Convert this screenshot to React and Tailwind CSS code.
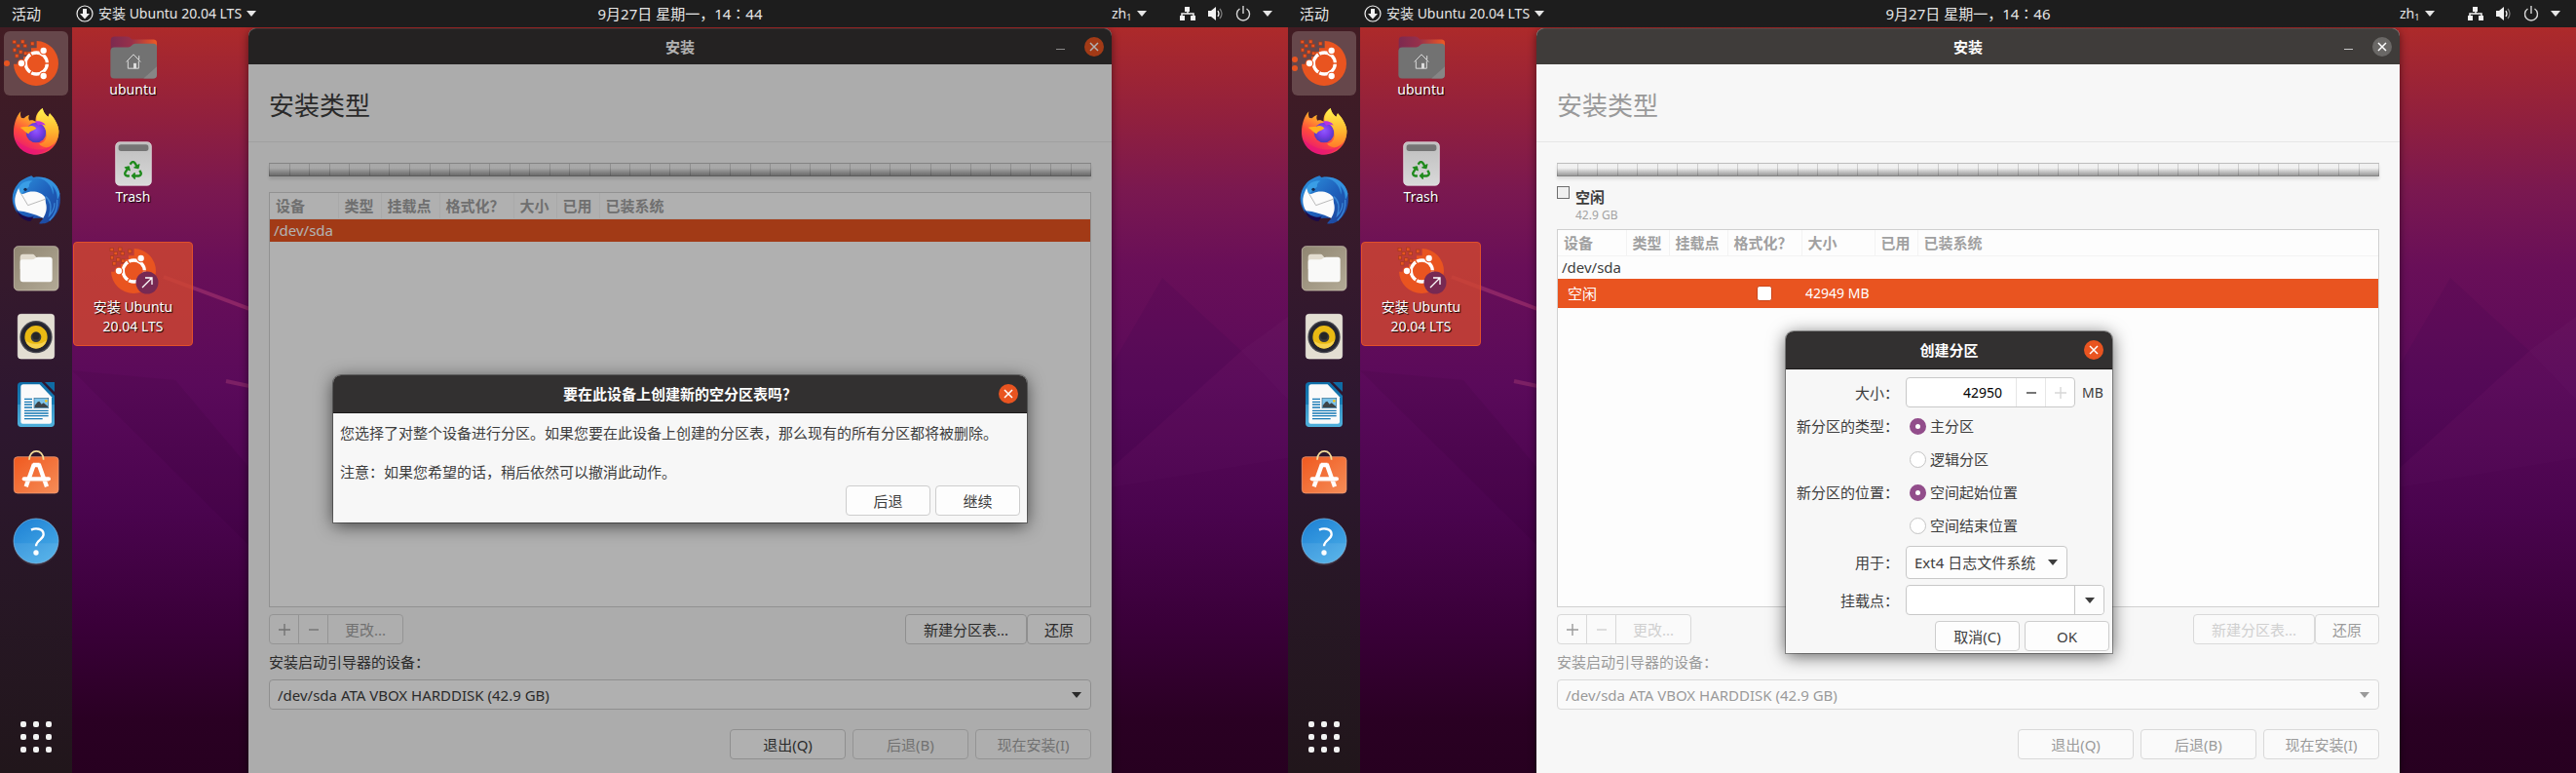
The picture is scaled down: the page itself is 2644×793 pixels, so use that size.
import React, { useId } from "react";
import { FaRecycle } from "react-icons/fa";

const FONT = "font-['Noto_Sans','Noto_Sans_CJK_SC',sans-serif]";

/* Shared gradients used by the dock and desktop icons */
function IconDefs() {
  return (
    <svg className="absolute h-0 w-0" aria-hidden="true">
      <defs>
        <linearGradient id="fox-body" x1="0.8" y1="0" x2="0.3" y2="1">
          <stop offset="0" stopColor="#fff44f" />
          <stop offset="0.35" stopColor="#ffa82a" />
          <stop offset="0.65" stopColor="#ff4a3d" />
          <stop offset="1" stopColor="#e6127a" />
        </linearGradient>
        <radialGradient id="fox-globe" cx="0.5" cy="0.4" r="0.6">
          <stop offset="0" stopColor="#9059ff" />
          <stop offset="0.5" stopColor="#7a3ce8" />
          <stop offset="1" stopColor="#4a3ab8" />
        </radialGradient>
        <linearGradient id="fox-tail" x1="0" y1="0" x2="0" y2="1">
          <stop offset="0" stopColor="#fff44f" />
          <stop offset="0.6" stopColor="#ffb42e" />
          <stop offset="1" stopColor="#ff7a2a" />
        </linearGradient>
        <linearGradient id="bird-body" x1="0" y1="0" x2="1" y2="1">
          <stop offset="0" stopColor="#2f97e0" />
          <stop offset="0.5" stopColor="#1f62bd" />
          <stop offset="1" stopColor="#1c3f96" />
        </linearGradient>
        <linearGradient id="files-bg" x1="0" y1="0" x2="1" y2="1">
          <stop offset="0" stopColor="#8f8571" />
          <stop offset="1" stopColor="#b3aa96" />
        </linearGradient>
        <linearGradient id="writer-bg" x1="0" y1="0" x2="0" y2="1">
          <stop offset="0" stopColor="#0e6ea8" />
          <stop offset="0.5" stopColor="#1b7db5" />
          <stop offset="0.51" stopColor="#3794c6" />
          <stop offset="1" stopColor="#4fb0dc" />
        </linearGradient>
        <linearGradient id="store-bg" x1="0" y1="0" x2="1" y2="1">
          <stop offset="0" stopColor="#f0591f" />
          <stop offset="1" stopColor="#f58d58" />
        </linearGradient>
        <linearGradient id="help-bg" x1="0" y1="0" x2="0.6" y2="1">
          <stop offset="0" stopColor="#1c7fd4" />
          <stop offset="1" stopColor="#47aae6" />
        </linearGradient>
        <linearGradient id="folder-tab" x1="0" y1="0" x2="1" y2="0">
          <stop offset="0" stopColor="#7c2a50" />
          <stop offset="0.45" stopColor="#97304a" />
          <stop offset="1" stopColor="#ef5a24" />
        </linearGradient>
        <linearGradient id="bin-body" x1="0" y1="0" x2="0" y2="1">
          <stop offset="0" stopColor="#bdbdbd" />
          <stop offset="1" stopColor="#d9d9d9" />
        </linearGradient>
      </defs>
    </svg>
  );
}

const PIXELS = [
  [38, 123], [64, 122], [50, 135], [71, 135], [94, 128], [39, 148],
  [58, 154], [73, 158], [46, 166],
];

function UbuntuIcon() {
  return (
    <svg viewBox="36 120 150 150" className="h-[50px] w-[50px]" aria-hidden="true">
      <path
        d="M113 126A69 69 0 1 1 42 197L60 197L60 184L72 184L72 174L84 174L84 160L96 160L96 148L113 148Z"
        fill="#e95420"
      />
      {PIXELS.map(([x, y]) => (
        <rect key={x + "-" + y} x={x + 1} y={y + 1} width="10" height="10" fill="#e95420" stroke="#a3391c" strokeWidth="2" />
      ))}
      <circle cx="112" cy="195" r="33" fill="none" stroke="#fff" strokeWidth="10" />
      <path d="M112 195L152 195M112 195L91 160M112 195L91 230" stroke="#e95420" strokeWidth="4" />
      <circle cx="112" cy="195" r="27" fill="#e95420" />
      {[[66, 195], [134, 156], [134, 234]].map(([x, y]) => (
        <g key={y}>
          <circle cx={x} cy={y} r="13" fill="#e95420" />
          <circle cx={x} cy={y} r="9.5" fill="#fff" />
        </g>
      ))}
    </svg>
  );
}

function FirefoxIcon() {
  return (
    <svg viewBox="36 328 150 150" className="h-[50px] w-[50px]" aria-hidden="true">
      <path
        d="M64 341C62 350 63 355 66 361L74 362C78 357 84 353 90 352C87 358 87 364 91 369C97 366 104 368 110 372C108 356 116 340 131 331C133 342 139 351 148 358L153 347C168 362 180 383 181 401C182 444 150 474 111 474C72 474 42 444 42 405C42 381 50 356 64 341Z"
        fill="url(#fox-body)"
      />
      <circle cx="111" cy="406" r="31" fill="url(#fox-globe)" />
      <path
        d="M131 331C133 342 139 351 148 358L153 347C168 362 180 383 181 401C181 420 174 436 160 446C144 456 128 452 120 440C136 438 144 426 143 411C142 395 136 384 126 379L118 378C108 366 116 342 131 331Z"
        fill="url(#fox-tail)"
      />
      <path d="M62 390C72 387 84 390 92 386C98 382 108 388 112 392C108 400 92 400 88 410C82 408 76 400 62 390Z" fill="#ffb01f" />
      <path d="M108 372C120 368 136 374 140 384C132 380 124 381 118 384Z" fill="#b833e1" />
      <path d="M46 425C54 456 84 472 112 470C140 469 164 452 174 428C160 464 92 474 46 425Z" fill="#e3127c" opacity="0.5" />
    </svg>
  );
}

function ThunderbirdIcon() {
  return (
    <svg viewBox="36 541 150 150" className="h-[50px] w-[50px]" aria-hidden="true">
      <path
        d="M56 566C64 556 80 547 97 542L103 547C142 540 176 560 184 596C190 632 178 668 146 686C138 690 128 690 120 689L134 672L110 672C84 676 60 668 48 648C32 620 36 588 56 566Z"
        fill="url(#bird-body)"
      />
      <path d="M50 645C62 664 84 672 104 668L94 682C72 680 56 666 50 645Z" fill="#1b0a4a" />
      <path d="M58 578C52 590 48 600 46 612C45 630 50 642 56 650C78 652 106 660 133 672C142 658 146 642 141 626L139 608C128 594 108 588 88 592C76 594 68 604 62 592Z" fill="#fbfbfb" />
      <path d="M62 592L86 633L139 614" fill="none" stroke="#b9b9b9" strokeWidth="3" />
      <path d="M58 580C64 562 84 556 100 558C92 562 88 568 90 575C84 582 72 590 66 598C62 592 58 586 58 580Z" fill="#3a9ee6" />
      <path d="M104 548C138 548 160 570 163 600C166 590 164 580 160 572C172 584 178 600 176 616C182 608 184 600 184 596C176 560 142 541 104 548Z" fill="#3491dd" />
      <path d="M140 606C154 616 160 636 152 664C162 654 168 640 168 626M176 616C178 640 168 664 152 680" fill="none" stroke="#3a86d6" strokeWidth="4" />
      <circle cx="78" cy="584" r="5" fill="#152a52" />
    </svg>
  );
}

function FilesIcon() {
  return (
    <svg viewBox="36 752 150 150" className="h-[50px] w-[50px]" aria-hidden="true">
      <rect x="43" y="760" width="137" height="136" rx="13" fill="url(#files-bg)" stroke="#d8d0bd" strokeWidth="2" />
      <path d="M62 794Q62 784 71 784H100Q104 784 107 788L112 794H152V830H62Z" fill="#e2dccf" />
      <path d="M62 808Q62 801 70 801H98Q104 801 108 797Q112 793 118 793H153Q161 793 161 801V861Q161 870 153 870H70Q62 870 62 861Z" fill="#f9f9f8" />
    </svg>
  );
}

function RhythmboxIcon() {
  return (
    <svg viewBox="36 962 150 150" className="h-[50px] w-[50px]" aria-hidden="true">
      <rect x="55" y="969" width="112" height="137" rx="10" fill="#e3ded2" stroke="#f4f1ea" strokeWidth="2" />
      <circle cx="111" cy="1039" r="50" fill="#4a4a52" />
      <circle cx="111" cy="1039" r="46" fill="#25252f" />
      <circle cx="111" cy="1039" r="35" fill="#e9b913" />
      <path d="M79 1050A33 33 0 0 0 143 1050Q128 1062 111 1060Q92 1062 79 1050Z" fill="#f6d24f" />
      <circle cx="111" cy="1039" r="16" fill="#3a3a3a" />
      <circle cx="111" cy="1036" r="11" fill="#262626" />
    </svg>
  );
}

function WriterIcon() {
  return (
    <svg viewBox="36 4 150 150" className="h-[50px] w-[50px]" aria-hidden="true">
      <path d="M66 10H128L168 52V137Q168 148 157 148H65Q54 148 54 137V21Q54 10 66 10Z" fill="url(#writer-bg)" />
      <path d="M138 10H168V40Z" fill="#0f6ba4" />
      <path d="M72 17H122L159 56V132Q159 138 153 138H70Q64 138 64 132V25Q64 17 72 17Z" fill="#fafafa" />
      <path d="M75 62H99M75 71H99M75 79H99M75 88H99M75 98H149M75 106H149M75 114H149M75 123H131" stroke="#1478b4" strokeWidth="4" />
      <rect x="105" y="59" width="44" height="31" fill="#7cc3ea" stroke="#3b6f8f" strokeWidth="2" />
      <path d="M107 88V82L116 71L121 69L128 78L134 74L147 84V88Z" fill="#3d4448" />
      <circle cx="142" cy="68" r="4" fill="#f3c21c" />
    </svg>
  );
}

function SoftwareIcon() {
  return (
    <svg viewBox="36 208 150 150" className="h-[50px] w-[50px]" aria-hidden="true">
      <rect x="43" y="234" width="137" height="112" rx="11" fill="url(#store-bg)" stroke="#f7a37c" strokeWidth="2" />
      <path d="M90 243C90 208 134 208 134 243" fill="none" stroke="#f4dd9a" strokeWidth="5" />
      <path d="M105 256L80 326M119 256L144 326M102 259H122" stroke="#fff" strokeWidth="13" />
      <path d="M74 302H150" stroke="#fff" strokeWidth="12" strokeLinecap="round" />
      <path d="M74 309H150" stroke="#f9cdb9" strokeWidth="2" />
    </svg>
  );
}

function HelpIcon() {
  return (
    <svg viewBox="36 425 150 150" className="h-[50px] w-[50px]" aria-hidden="true">
      <circle cx="111" cy="500" r="69" fill="url(#help-bg)" stroke="#7fc0ec" strokeWidth="2" />
      <path d="M42 507A69 69 0 0 0 180 507Z" fill="#fff" opacity="0.08" />
      <path d="M96 466C108 460 134 460 134 480C134 496 111 498 111 516" fill="none" stroke="#fff" strokeWidth="7" />
      <circle cx="111" cy="536" r="8" fill="#fff" />
    </svg>
  );
}

function HomeFolderIcon() {
  return (
    <svg viewBox="334 105 150 140" className="h-[47px] w-[50px]" aria-hidden="true">
      <path d="M339 160V124Q339 112 351 112H388Q395 112 399 116L404 121H470Q481 121 481 132V160Z" fill="url(#folder-tab)" />
      <path d="M338 158Q338 145 350 145H392Q399 145 404 139Q408 134 415 134H470Q481 134 481 145V230Q481 241 470 241H349Q338 241 338 230Z" fill="#727272" />
      <path d="M481 204V230Q481 241 470 241H440Z" fill="#868686" />
      <path d="M387 190L409 167L431 190M392 187V210H425V187M426 183V171" fill="none" stroke="#dcdcdc" strokeWidth="3" />
      <rect x="409" y="194" width="9" height="16" fill="#dcdcdc" />
    </svg>
  );
}

function TrashIcon() {
  return (
    <span className="relative flex h-[46px] w-[38px] justify-center">
      <svg viewBox="351 435 116 140" className="h-[46px] w-[38px]" aria-hidden="true">
        <rect x="353" y="437" width="112" height="136" rx="13" fill="url(#bin-body)" stroke="#ececec" strokeWidth="2" />
        <rect x="362" y="445" width="94" height="20" rx="8" fill="#757575" />
      </svg>
      <FaRecycle className="absolute top-[20px] h-[19px] w-[19px] text-[#1f8a1c]" />
    </span>
  );
}

function InstallShortcutIcon() {
  return (
    <span className="relative">
      <UbuntuIcon />
      <svg viewBox="0 0 24 24" className="absolute -right-px bottom-px h-6 w-6" aria-hidden="true">
        <circle cx="12" cy="12" r="11.500" fill="#772953" />
        <path d="M7 17L16.500 7.500M10 7H17V14" fill="none" stroke="#fff" strokeWidth="1.300" />
      </svg>
    </span>
  );
}

function Triangle({ className }) {
  return (
    <svg viewBox="0 0 10 6" className={"h-[6px] w-[10px] shrink-0 fill-current " + (className || "")} aria-hidden="true">
      <path d="M0 0H10L5 6Z" />
    </svg>
  );
}

function TopBar({ time }) {
  return (
    <header className="flex h-7 shrink-0 items-center bg-[#1d1d1d] text-[#e6e6e6]">
      <div className="flex w-[255px] shrink-0 items-center pl-3">
        <button className="w-[66px] shrink-0 text-left text-[15px] leading-7">活动</button>
        <button className="flex shrink-0 items-center gap-[5px] whitespace-nowrap text-sm leading-7">
          <svg viewBox="0 0 18 18" className="h-[18px] w-[18px]" aria-hidden="true">
            <circle cx="9" cy="9" r="8" fill="none" stroke="#f2f2f2" strokeWidth="1.200" />
            <path d="M7 4H11V9H14L9 14.500L4 9H7Z" fill="#f2f2f2" />
          </svg>
          <span>安装 Ubuntu 20.04 LTS</span>
          <Triangle />
        </button>
      </div>
      <div className="flex-1 text-center text-[15px] leading-7">9月27日 星期一，{time}</div>
      <div className="flex w-[181px] shrink-0 items-center">
        <button className="flex w-[69px] items-center gap-[6px] text-sm leading-7">
          <span>zh<sub className="text-[9px]">1</sub></span>
          <Triangle />
        </button>
        <button className="flex items-center gap-3" aria-label="系统菜单">
          <svg viewBox="0 0 18 16" className="h-4 w-[18px]" aria-hidden="true">
            <path d="M6 1H11V6H6ZM1 10H6V15H1ZM12 10H17V15H12Z" fill="#f2f2f2" />
            <path d="M9 6V8M3 11V8H15V11" fill="none" stroke="#f2f2f2" strokeWidth="1.500" />
          </svg>
          <svg viewBox="0 0 16 16" className="h-4 w-4" aria-hidden="true">
            <path d="M0 5H3L8 1V15L3 11H0Z" fill="#f2f2f2" />
            <path d="M10 5Q12 8 10 11" fill="none" stroke="#f2f2f2" strokeWidth="1.300" />
            <path d="M12 3Q16 8 12 13" fill="none" stroke="#7a7a7a" strokeWidth="1.300" />
          </svg>
          <svg viewBox="0 0 16 16" className="h-4 w-4" aria-hidden="true">
            <path d="M4.500 3A6.500 6.500 0 1 0 11.500 3M8 0V8" fill="none" stroke="#d6d6d6" strokeWidth="1.400" />
          </svg>
          <Triangle />
        </button>
      </div>
    </header>
  );
}

const DOCK = [
  ["安装 Ubuntu", UbuntuIcon],
  ["Firefox", FirefoxIcon],
  ["Thunderbird", ThunderbirdIcon],
  ["文件", FilesIcon],
  ["Rhythmbox", RhythmboxIcon],
  ["LibreOffice Writer", WriterIcon],
  ["Ubuntu Software", SoftwareIcon],
  ["帮助", HelpIcon],
];

function Dock({ running }) {
  return (
    <nav className="flex w-[74px] shrink-0 flex-col items-center gap-1 bg-linear-to-b from-[#421c23] via-[#2e1730] to-[#21161b] pt-1 pb-1">
      {DOCK.map(([name, Icon], i) => (
        <button
          key={name}
          aria-label={name}
          className={
            "relative flex h-[66px] w-[66px] items-center justify-center rounded-md " +
            (i === 0 ? "bg-[#66474b]" : "")
          }
        >
          {i === 0 && (
            <span className="absolute inset-y-0 left-0 flex flex-col justify-center gap-[3px]">
              {Array.from({ length: running }, (_, n) => (
                <span key={n} className="h-[6px] w-[6px] rounded-full bg-[#e95420]" />
              ))}
            </span>
          )}
          <Icon />
        </button>
      ))}
      <button aria-label="显示应用程序" className="mt-auto grid h-[66px] w-[66px] grid-cols-3 place-content-center gap-[7px] px-[17px]">
        {Array.from({ length: 9 }, (_, n) => (
          <span key={n} className="h-[6px] w-[6px] rounded-[2px] bg-[#f2f2f2]" />
        ))}
      </button>
    </nav>
  );
}

function DesktopItem({ icon, lines, selected }) {
  return (
    <button
      className={
        "flex h-[107px] w-[123px] flex-col items-center rounded border pt-[5px] text-sm leading-5 text-white [text-shadow:1px_1px_1px_#000] " +
        (selected ? "border-[#e2502a] bg-[#d2472f]/80" : "border-transparent")
      }
    >
      <span className={"flex h-12 items-center " + (selected ? "mb-[3px]" : "")}>{icon}</span>
      {lines.map((l) => (
        <span key={l}>{l}</span>
      ))}
    </button>
  );
}

function Wallpaper() {
  return (
    <svg viewBox="0 28 1322 765" preserveAspectRatio="none" className="absolute inset-0 h-full w-full" aria-hidden="true">
      <path d="M74 380L256 560V480L180 390Z" fill="#000" opacity="0.05" />
      <path d="M168 284L256 317" stroke="#8c2566" strokeWidth="4" />
      <path d="M232 391L256 396" stroke="#7c2065" strokeWidth="4" />
      <path d="M1193 285L1274 360L1141 480V375Z" fill="#1a0040" opacity="0.08" />
      <path d="M1322 325L1274 360L1322 410Z" fill="#fff" opacity="0.02" />
      <path d="M1274 360L1322 410V470L1141 500V480Z" fill="#fff" opacity="0.01" />
    </svg>
  );
}

function CloseButton({ tone }) {
  const tones = {
    active: "bg-[#e95420]",
    inactive: "bg-[#6a6866]",
  };
  return (
    <button aria-label="关闭" className={"flex h-5 w-5 items-center justify-center rounded-full " + tones[tone]}>
      <svg viewBox="0 0 10 10" className="h-[10px] w-[10px]" aria-hidden="true">
        <path d="M1 1L9 9M9 1L1 9" stroke="#fff" strokeWidth="1.500" />
      </svg>
    </button>
  );
}

const TONES = {
  normal: "border-[#cdcdcd] bg-[#fdfdfd] text-[#3d3d3d]",
  backdrop: "border-[#d9d9d9] bg-[#fafafa] text-[#9a9a9a]",
  disabled: "border-[#d5d5d5] bg-[#fafafa] text-[#a3a3a3]",
  faint: "border-[#d9d9d9] bg-[#fafafa] text-[#d0d0d0]",
};

function Btn({ tone = "normal", className, children, ...rest }) {
  return (
    <button
      disabled={tone === "disabled" || tone === "faint"}
      className={"flex h-[31px] items-center justify-center whitespace-nowrap border text-[15px] leading-5 " + TONES[tone] + " " + className}
      {...rest}
    >
      {children}
    </button>
  );
}

function PlusGlyph() {
  return (
    <svg viewBox="0 0 12 12" className="h-3 w-3" aria-hidden="true">
      <path d="M0 6H12M6 0V12" stroke="currentColor" strokeWidth="1.400" />
    </svg>
  );
}

function MinusGlyph() {
  return (
    <svg viewBox="0 0 12 12" className="h-3 w-3" aria-hidden="true">
      <path d="M1 6H11" stroke="currentColor" strokeWidth="1.400" />
    </svg>
  );
}

function DiskBar() {
  return (
    <div className="h-5 shrink-0">
      <div className="flex h-[14px] border-t border-[#bdbdbd] bg-linear-to-b from-[#f1f1f1] from-35% to-[#9a9a9a] shadow-[0_3px_3px_#0000001c] border-b border-b-[#858585]">
        {Array.from({ length: 41 }, (_, n) => (
          <span key={n} className="flex-1 border-l border-black/15 last:border-r" />
        ))}
      </div>
    </div>
  );
}

function Th({ children, className }) {
  return (
    <th className={"h-[26px] border-r border-b border-[#f3f3f3] pl-[6px] text-left font-bold " + (className || "")}>
      {children}
    </th>
  );
}

function PartitionTable({ wide, children }) {
  return (
    <div className="flex-1 border border-[#d0d0d0] bg-[#fdfdfd]">
      <table className="w-full table-fixed whitespace-nowrap text-[15px] leading-5 text-[#3d3d3d]">
        <thead className="text-[#a0a0a0]">
          <tr>
            <Th className="w-[70px]">设备</Th>
            <Th className="w-[44px]">类型</Th>
            <Th className="w-[60px]">挂载点</Th>
            <Th className="w-[76px]">格式化？</Th>
            <Th className={wide ? "w-[75px]" : "w-[44px]"}>大小</Th>
            <Th className="w-[44px]">已用</Th>
            <Th className="border-r-0">已装系统</Th>
          </tr>
        </thead>
        <tbody>{children}</tbody>
      </table>
    </div>
  );
}

function InstallerWindow({ active, bar, children, dialog }) {
  const device = useId();
  const text = active ? "text-[#3d3d3d]" : "text-[#9a9a9a]";
  const tone = active ? "normal" : "backdrop";
  return (
    <main className="relative mr-[181px] mt-px flex min-w-0 flex-1 flex-col rounded-t-lg bg-[#f7f7f7] shadow-[0_2px_8px_#00000080]">
      <div
        className={
          "flex h-[37px] shrink-0 items-center rounded-t-lg border-t pr-2 pl-[63px] text-white " +
          (active ? "border-[#4a4747] bg-[#343131]" : "border-[#4b4947] bg-[#3f3c3a]")
        }
      >
        <h1 className="flex-1 text-center text-[15px] font-bold leading-5">安装</h1>
        <div className="flex items-center gap-[15px]">
          <button aria-label="最小化" className="flex h-5 w-5 items-center justify-center">
            <span className="mt-1 h-px w-[9px] bg-[#c8c8c8]" />
          </button>
          <CloseButton tone={active ? "active" : "inactive"} />
        </div>
      </div>
      <div className={"flex h-20 shrink-0 items-center border-b border-[#e6e6e6] px-[21px] pt-1 text-[26px] leading-8 " + text}>
        <h2>安装类型</h2>
      </div>
      <div className="flex flex-1 flex-col px-[21px] pt-[21px] pb-[14px]">
        {bar}
        {children}
        <div className="mt-[7px] flex justify-between">
          <div className="flex">
            <Btn tone={active ? "disabled" : "backdrop"} className="w-[31px] rounded-l" aria-label="添加"><PlusGlyph /></Btn>
            <Btn tone={active ? "disabled" : "faint"} className="-ml-px w-[31px]" aria-label="删除"><MinusGlyph /></Btn>
            <Btn tone={active ? "disabled" : "faint"} className="-ml-px w-[78px] rounded-r">更改...</Btn>
          </div>
          <div className="flex">
            <Btn tone={active ? "normal" : "faint"} className="w-[125px] rounded">新建分区表...</Btn>
            <Btn tone={tone} className="w-[66px] rounded">还原</Btn>
          </div>
        </div>
        <label htmlFor={device} className={"text-[15px] leading-9 " + text}>安装启动引导器的设备：</label>
        <div className={"relative flex items-center " + text}>
          <select
            id={device}
            className={"h-[31px] w-full appearance-none rounded border pl-2 text-[15px] leading-5 " + (active ? TONES.normal : TONES.backdrop)}
          >
            <option>/dev/sda ATA VBOX HARDDISK (42.9 GB)</option>
          </select>
          <Triangle className="pointer-events-none absolute right-[10px]" />
        </div>
        <div className="mt-5 flex justify-end gap-[7px]">
          <Btn tone={tone} className="w-[119px] rounded">退出(Q)</Btn>
          <Btn tone={active ? "disabled" : "backdrop"} className="w-[119px] rounded">后退(B)</Btn>
          <Btn tone={active ? "disabled" : "backdrop"} className="w-[119px] rounded">现在安装(I)</Btn>
        </div>
      </div>
      {active && <div className="absolute inset-0 rounded-t-lg bg-black/30" />}
      {dialog}
    </main>
  );
}

function Dialog({ title, className, children }) {
  return (
    <section
      role="dialog"
      aria-label={title}
      className={"absolute rounded-t-lg bg-[#f7f7f7] text-[15px] leading-5 text-[#3d3d3d] shadow-[0_0_0_1px_#00000055,0_3px_18px_#000000a0] " + className}
    >
      <div className="flex h-[39px] items-center rounded-t-lg border-b border-[#1c1a1a] bg-[#323030] pr-[9px] pl-[29px] text-white">
        <h2 className="flex-1 text-center font-bold">{title}</h2>
        <CloseButton tone="active" />
      </div>
      {children}
    </section>
  );
}

function ConfirmDialog() {
  return (
    <Dialog title="要在此设备上创建新的空分区表吗？" className="top-[356px] left-1/2 w-[712px] -translate-x-1/2">
      <div className="px-[7px] pt-[10px] pb-[7px]">
        <p>您选择了对整个设备进行分区。如果您要在此设备上创建的分区表，那么现有的所有分区都将被删除。</p>
        <p className="mt-5">注意：如果您希望的话，稍后依然可以撤消此动作。</p>
        <div className="mt-1 flex justify-end gap-[5px]">
          <Btn className="w-[87px] rounded">后退</Btn>
          <Btn className="w-[87px] rounded">继续</Btn>
        </div>
      </div>
    </Dialog>
  );
}

function Radio({ name, label, checked }) {
  return (
    <label className="flex h-[34px] items-center gap-1 pl-1">
      <input
        type="radio"
        name={name}
        defaultChecked={checked}
        className="h-[17px] w-[17px] appearance-none rounded-full border border-[#c4c4c4] bg-white checked:border-[6px] checked:border-[#924d8b]"
      />
      {label}
    </label>
  );
}

function CreateDialog() {
  return (
    <Dialog title="创建分区" className="top-[311px] left-[256px] w-[335px]">
      <div className="grid grid-cols-[116px_minmax(0,1fr)] gap-x-[7px] pt-2 pr-2">
        <label htmlFor="size" className="self-center text-right">大小：</label>
        <div className="flex items-center gap-[7px]">
          <div className="flex h-[31px] w-[174px] rounded border border-[#c8c8c8] bg-white">
            <input id="size" defaultValue="42950" className="min-w-0 flex-1 pr-[14px] text-right text-sm text-black" />
            <button aria-label="减少" className="flex w-[30px] items-center justify-center border-l border-[#e6e6e6]"><MinusGlyph /></button>
            <button aria-label="增加" disabled className="flex w-[30px] items-center justify-center border-l border-[#e6e6e6] text-[#d8d8d8]"><PlusGlyph /></button>
          </div>
          <span className="text-sm">MB</span>
        </div>

        <span className="mt-[2px] text-right leading-[34px]">新分区的类型：</span>
        <div role="radiogroup" aria-label="新分区的类型" className="mt-[2px]">
          <Radio name="kind" label="主分区" checked />
          <Radio name="kind" label="逻辑分区" />
        </div>
        <span className="text-right leading-[34px]">新分区的位置：</span>
        <div role="radiogroup" aria-label="新分区的位置">
          <Radio name="place" label="空间起始位置" checked />
          <Radio name="place" label="空间结束位置" />
        </div>

        <label htmlFor="use" className="mt-1 self-center text-right">用于：</label>
        <div className="relative mt-1 flex w-[166px] items-center">
          <select id="use" className="h-[34px] w-full appearance-none rounded border border-[#c8c8c8] bg-[#fdfdfd] pl-2">
            <option>Ext4 日志文件系统</option>
          </select>
          <Triangle className="pointer-events-none absolute right-[10px]" />
        </div>

        <label htmlFor="mount" className="mt-[6px] self-center text-right">挂载点：</label>
        <div className="mt-[6px] flex h-[31px] rounded border border-[#c8c8c8] bg-white">
          <input id="mount" className="min-w-0 flex-1 px-2 text-sm" />
          <button aria-label="选择挂载点" className="flex w-[30px] shrink-0 items-center justify-center rounded-r border-l border-[#c8c8c8] bg-[#fdfdfd]">
            <Triangle />
          </button>
        </div>
      </div>
      <div className="flex justify-end gap-[5px] pt-[6px] pr-[3px] pb-[2px]">
        <Btn className="w-[87px] rounded">取消(C)</Btn>
        <Btn className="w-[87px] rounded">OK</Btn>
      </div>
    </Dialog>
  );
}

function Desktop({ time, running, children }) {
  return (
    <section className="flex min-w-0 flex-1 flex-col">
      <TopBar time={time} />
      <div className="relative flex flex-1 overflow-hidden bg-[linear-gradient(#ad2a2a_0%,#8f1f3f_13%,#7a1850_22%,#690f58_32%,#5a0a5a_48%,#4a044e_65%,#3a0039_80%,#2a0023_93%,#270020_100%)]">
        <Wallpaper />
        <div className="relative flex flex-1">
          <Dock running={running} />
          <div className="flex w-[181px] shrink-0 flex-col gap-[3px] pl-px">
            <DesktopItem icon={<HomeFolderIcon />} lines={["ubuntu"]} />
            <DesktopItem icon={<TrashIcon />} lines={["Trash"]} />
            <DesktopItem icon={<InstallShortcutIcon />} lines={["安装 Ubuntu", "20.04 LTS"]} selected />
          </div>
          {children}
        </div>
      </div>
    </section>
  );
}

export default function App() {
  return (
    <div className={"flex min-h-screen " + FONT}>
      <IconDefs />
      <Desktop time="14∶44" running={1}>
        <InstallerWindow
          active
          bar={<div className="mb-[10px]"><DiskBar /></div>}
          dialog={<ConfirmDialog />}
        >
          <PartitionTable>
            <tr className="h-6 bg-[#e95420] text-white">
              <td colSpan={7} className="pl-1">/dev/sda</td>
            </tr>
          </PartitionTable>
        </InstallerWindow>
      </Desktop>
      <Desktop time="14∶46" running={2}>
        <InstallerWindow
          bar={
            <>
              <DiskBar />
              <div className="mt-1 mb-[7px] flex gap-[6px]">
                <span className="h-[13px] w-[13px] border border-[#6e6e6e] bg-[#f0f0f0]" />
                <div className="text-[#3d3d3d]">
                  <div className="text-[15px] font-bold leading-[22px]">空闲</div>
                  <div className="text-xs leading-[15px] text-[#a3a3a3]">42.9 GB</div>
                </div>
              </div>
            </>
          }
          dialog={<CreateDialog />}
        >
          <PartitionTable wide>
            <tr className="h-6">
              <td colSpan={7} className="pl-1">/dev/sda</td>
            </tr>
            <tr className="h-[30px] bg-[#e95420] text-white">
              <td className="pl-[10px]">空闲</td>
              <td />
              <td />
              <td>
                <input
                  type="checkbox"
                  aria-label="格式化"
                  className="ml-[30px] block h-4 w-4 appearance-none rounded-[3px] border border-[#c9451a] bg-white"
                />
              </td>
              <td className="pl-1 text-sm">42949 MB</td>
              <td />
              <td />
            </tr>
          </PartitionTable>
        </InstallerWindow>
      </Desktop>
    </div>
  );
}
